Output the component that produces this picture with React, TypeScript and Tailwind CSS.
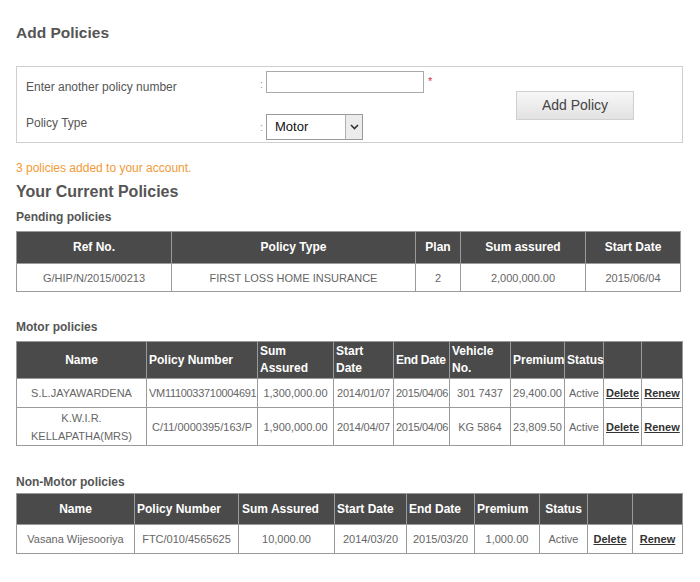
import React from "react";

const font = { fontFamily: '"Liberation Sans", Arial, sans-serif' };

function Th({ children, className = "" }: { children?: React.ReactNode; className?: string }) {
  return (
    <th className={`border border-[#9a9a9a] bg-[#4a4a4a] px-[2px] py-[1px] text-[12px] font-bold leading-[17px] text-white ${className}`}>
      {children}
    </th>
  );
}

function Td({ children, className = "" }: { children?: React.ReactNode; className?: string }) {
  return (
    <td className={`border border-[#9a9a9a] px-[2px] py-0 text-center text-[11px] leading-[18px] text-[#666] ${className}`}>
      {children}
    </td>
  );
}

function Link({ children }: { children: React.ReactNode }) {
  return <span className="font-bold text-[#333] underline">{children}</span>;
}

export default function App() {
  return (
    <div className="min-h-[582px] w-[700px] bg-white pl-[16px]" style={font}>
      <h1 className="pt-[23px] text-[15.5px] font-bold leading-[20px] text-[#555]">Add Policies</h1>

      <div className="mt-[23px] flex h-[77px] w-[667px] items-center border border-[#cfcfcf]">
        <div className="flex w-[499px] flex-col self-start pl-[9px] pt-[4px]">
          <div className="flex items-start">
            <div className="mt-[8px] w-[234px] text-[12px] leading-[16px] text-[#555]">Enter another policy number</div>
            <div className="mt-[5px] w-[6px] text-[11px] leading-[16px] text-[#999]">:</div>
            <input className="h-[22px] w-[158px] border border-[#aaa] bg-white" />
            <span className="ml-[4px] mt-[3px] text-[11px] leading-[14px] text-[#e03030]">*</span>
          </div>
          <div className="mt-[19px] flex items-start">
            <div className="mt-[1px] w-[234px] text-[12px] leading-[16px] text-[#555]">Policy Type</div>
            <div className="mt-[5px] w-[6px] text-[11px] leading-[16px] text-[#999]">:</div>
            <div className="relative flex h-[26px] w-[97px] items-center border border-[#9a9a9a] bg-white">
              <span className="pl-[8px] text-[13px] text-[#111]">Motor</span>
              <div className="absolute right-0 top-0 flex h-[24px] w-[17px] items-center justify-center border-l border-[#b0b0b0] bg-[#ececec]">
                <svg width="9" height="6" viewBox="0 0 9 6">
                  <path d="M1 1 L4.5 4.5 L8 1" fill="none" stroke="#333" strokeWidth="1.6" />
                </svg>
              </div>
            </div>
          </div>
        </div>
        <button className="mt-[2px] h-[29px] w-[118px] border border-[#d0d0d0] bg-gradient-to-b from-[#f7f7f7] to-[#e2e2e2] text-[14px] text-[#444]">
          Add Policy
        </button>
      </div>

      <div className="mt-[17px] text-[12px] leading-[16px] text-[#f39a38]">3 policies added to your account.</div>
      <h2 className="mt-[6px] text-[16px] font-bold leading-[20px] text-[#555]">Your Current Policies</h2>
      <h3 className="mt-[7px] text-[12px] font-bold leading-[16px] text-[#555]">Pending policies</h3>

      <table className="mt-[6px] w-[664px] table-fixed border-collapse border border-[#8a8a8a]">
        <colgroup>
          <col className="w-[155px]" />
          <col className="w-[244px]" />
          <col className="w-[45px]" />
          <col className="w-[125px]" />
          <col className="w-[95px]" />
        </colgroup>
        <thead>
          <tr className="h-[32px]">
            <Th>Ref No.</Th>
            <Th>Policy Type</Th>
            <Th>Plan</Th>
            <Th>Sum assured</Th>
            <Th>Start Date</Th>
          </tr>
        </thead>
        <tbody>
          <tr className="h-[28px]">
            <Td>G/HIP/N/2015/00213</Td>
            <Td>FIRST LOSS HOME INSURANCE</Td>
            <Td>2</Td>
            <Td>2,000,000.00</Td>
            <Td>2015/06/04</Td>
          </tr>
        </tbody>
      </table>

      <h3 className="mt-[27px] text-[12px] font-bold leading-[16px] text-[#555]">Motor policies</h3>
      <table className="mt-[6px] w-[666px] table-fixed border-collapse border border-[#8a8a8a]">
        <colgroup>
          <col className="w-[130px]" />
          <col className="w-[111px]" />
          <col className="w-[76px]" />
          <col className="w-[60px]" />
          <col className="w-[56px]" />
          <col className="w-[61px]" />
          <col className="w-[54px]" />
          <col className="w-[39px]" />
          <col className="w-[38px]" />
          <col className="w-[41px]" />
        </colgroup>
        <thead>
          <tr className="h-[37px]">
            <Th>Name</Th>
            <Th className="text-left">Policy Number</Th>
            <Th className="text-left">Sum Assured</Th>
            <Th className="text-left">Start Date</Th>
            <Th className="whitespace-nowrap px-[1px] text-left tracking-[-0.3px]">End Date</Th>
            <Th className="text-left">Vehicle No.</Th>
            <Th className="text-left">Premium</Th>
            <Th className="text-left">Status</Th>
            <Th />
            <Th />
          </tr>
        </thead>
        <tbody>
          <tr className="h-[29px]">
            <Td>S.L.JAYAWARDENA</Td>
            <Td className="px-0 tracking-[-0.3px]">VM1110033710004691</Td>
            <Td>1,300,000.00</Td>
            <Td className="px-0 tracking-[-0.2px]">2014/01/07</Td>
            <Td className="px-0 tracking-[-0.3px]">2015/04/06</Td>
            <Td>301 7437</Td>
            <Td className="px-0">29,400.00</Td>
            <Td className="px-0">Active</Td>
            <Td className="px-0"><Link>Delete</Link></Td>
            <Td className="px-0"><Link>Renew</Link></Td>
          </tr>
          <tr className="h-[38px]">
            <Td>K.W.I.R.<br />KELLAPATHA(MRS)</Td>
            <Td className="px-0">C/11/0000395/163/P</Td>
            <Td>1,900,000.00</Td>
            <Td className="px-0 tracking-[-0.2px]">2014/04/07</Td>
            <Td className="px-0 tracking-[-0.3px]">2015/04/06</Td>
            <Td>KG 5864</Td>
            <Td className="px-0">23,809.50</Td>
            <Td className="px-0">Active</Td>
            <Td className="px-0"><Link>Delete</Link></Td>
            <Td className="px-0"><Link>Renew</Link></Td>
          </tr>
        </tbody>
      </table>

      <h3 className="mt-[28px] text-[12px] font-bold leading-[16px] text-[#555]">Non-Motor policies</h3>
      <table className="mt-[3px] w-[666px] table-fixed border-collapse border border-[#8a8a8a]">
        <colgroup>
          <col className="w-[118px]" />
          <col className="w-[104px]" />
          <col className="w-[96px]" />
          <col className="w-[72px]" />
          <col className="w-[68px]" />
          <col className="w-[65px]" />
          <col className="w-[48px]" />
          <col className="w-[45px]" />
          <col className="w-[50px]" />
        </colgroup>
        <thead>
          <tr className="h-[31px]">
            <Th>Name</Th>
            <Th className="text-left">Policy Number</Th>
            <Th className="pl-[3px] text-left">Sum Assured</Th>
            <Th className="text-left">Start Date</Th>
            <Th className="text-left">End Date</Th>
            <Th className="text-left">Premium</Th>
            <Th>Status</Th>
            <Th />
            <Th />
          </tr>
        </thead>
        <tbody>
          <tr className="h-[29px]">
            <Td>Vasana Wijesooriya</Td>
            <Td>FTC/010/4565625</Td>
            <Td>10,000.00</Td>
            <Td>2014/03/20</Td>
            <Td>2015/03/20</Td>
            <Td>1,000.00</Td>
            <Td>Active</Td>
            <Td><Link>Delete</Link></Td>
            <Td><Link>Renew</Link></Td>
          </tr>
        </tbody>
      </table>
    </div>
  );
}
